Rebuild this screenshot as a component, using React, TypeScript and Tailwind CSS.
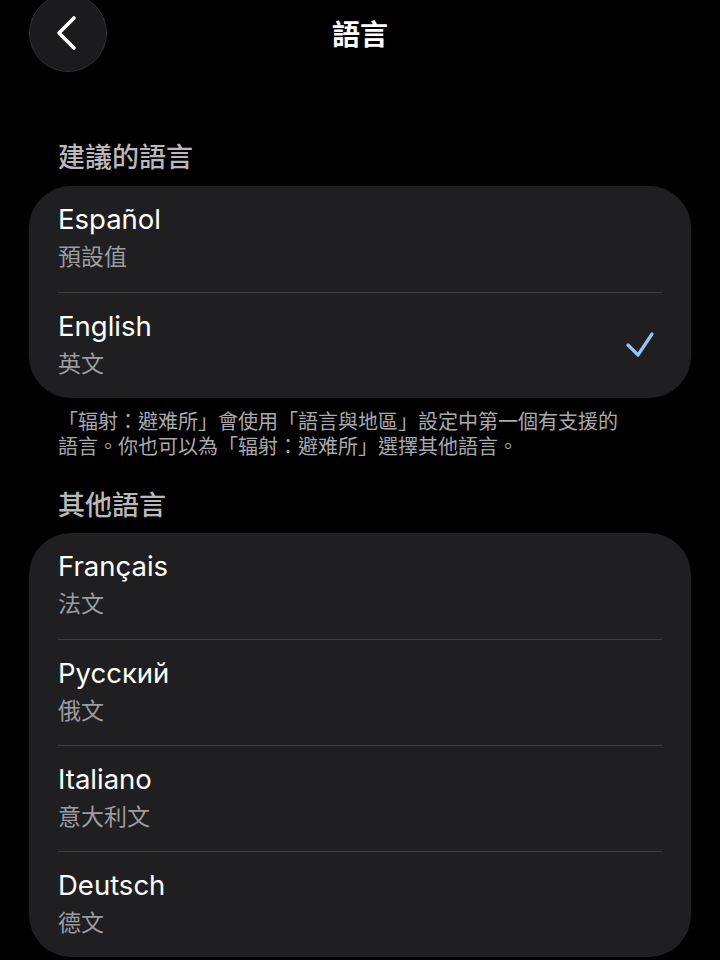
import React from 'react';

interface Lang {
  name: string;
  local: string;
  selected?: boolean;
}

const suggested: Lang[] = [
  { name: 'Español', local: '預設值' },
  { name: 'English', local: '英文', selected: true },
];

const others: Lang[] = [
  { name: 'Français', local: '法文' },
  { name: 'Русский', local: '俄文' },
  { name: 'Italiano', local: '意大利文' },
  { name: 'Deutsch', local: '德文' },
];

const font = { fontFamily: 'Inter, "Noto Sans CJK TC", "Noto Sans", sans-serif' };

function LangRow({ lang, first }: { lang: Lang; first: boolean }) {
  return (
    <div className="px-[29px]">
      <div className={`flex items-center h-[106px] ${first ? '' : 'border-t border-[#3f3f42]'}`}>
        <div className="flex-1 flex flex-col pb-[4px]">
          <span className="text-[27.5px] leading-[34px] text-white">{lang.name}</span>
          <span className="text-[23px] leading-[30px] text-[#9c9ca1] mt-[6px]">{lang.local}</span>
        </div>
        {lang.selected && (
          <svg width="34" height="30" viewBox="0 0 34 30" className="mr-[4px]">
            <path d="M4 14 L14 24 L28 3" fill="none" stroke="#8fc6f6" strokeWidth="3.2" strokeLinecap="round" strokeLinejoin="round" />
          </svg>
        )}
      </div>
    </div>
  );
}

function LangCard({ items }: { items: Lang[] }) {
  return (
    <div className="mx-[29px] rounded-[42px] bg-[#1f1f21] overflow-hidden">
      {items.map((l, i) => (
        <LangRow key={l.name} lang={l} first={i === 0} />
      ))}
    </div>
  );
}

export default function App() {
  return (
    <div className="w-[720px] h-[960px] bg-black overflow-hidden" style={font}>
      {/* 頂部列 */}
      <div className="grid grid-cols-[1fr_auto_1fr] items-start h-[72px]">
        <button className="ml-[29px] -mt-[6px] w-[78px] h-[78px] rounded-full bg-[#1b1b1d] border border-[#303033] flex items-center justify-center">
          <svg width="24" height="36" viewBox="0 0 24 36" className="-ml-[2px]">
            <path d="M19 3 L4 18 L19 33" fill="none" stroke="white" strokeWidth="3.6" strokeLinecap="round" strokeLinejoin="round" />
          </svg>
        </button>
        <h1 className="text-[28px] leading-[34px] font-bold text-white mt-[18px]">語言</h1>
        <div />
      </div>

      <h2 className="mt-[69px] mb-[11px] px-[58px] text-[27px] leading-[34px] font-medium text-[#b9b9bd]">建議的語言</h2>
      <LangCard items={suggested} />

      <p className="mt-[12px] ml-[58px] w-[575px] text-[20px] leading-[25px] text-[#a9a9ae]">
        「辐射：避难所」會使用「語言與地區」設定中第一個有支援的語言。你也可以為「辐射：避难所」選擇其他語言。
      </p>

      <h2 className="mt-[29px] mb-[10px] px-[58px] text-[27px] leading-[34px] font-medium text-[#b9b9bd]">其他語言</h2>
      <LangCard items={others} />
    </div>
  );
}
